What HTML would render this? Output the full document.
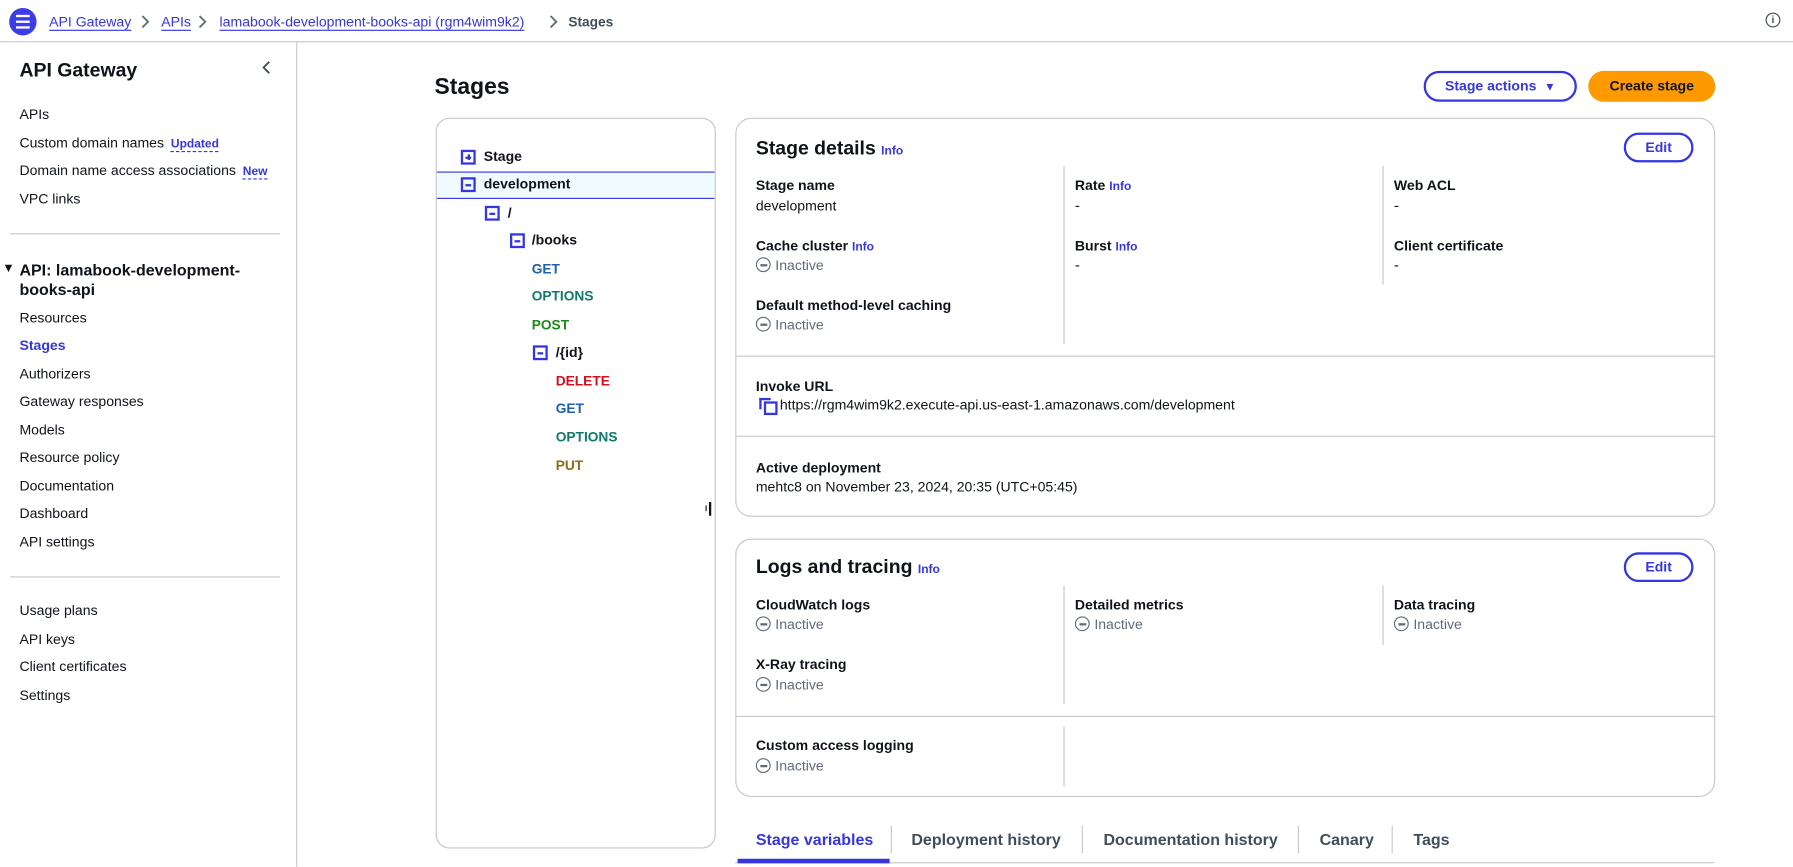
<!DOCTYPE html>
<html><head><meta charset="utf-8">
<style>
html,body{margin:0;padding:0;background:#fff;overflow:hidden;width:1793px;height:867px}
#w{position:absolute;left:0;top:0;width:1568px;height:758px;transform:scale(1.14349);transform-origin:0 0;font-family:"Liberation Sans",sans-serif;color:#0f141a;font-size:13px}
.a{position:absolute;white-space:nowrap;line-height:16px}
.b{font-weight:bold}
.bl{color:#3636e0}
.lk{color:#3636e0;text-decoration:underline;text-underline-offset:3px}
.g{color:#5f6b7a}
.n{font-size:12.3px}
.hl{position:absolute;background:#c6c6cd;height:1px}
.vl{position:absolute;background:#c6c6cd;width:1px}
.card{position:absolute;border:1px solid #c6c6cd;border-radius:14px;background:#fff}
.box{position:absolute;width:9px;height:9px;border:2px solid #3636e0}
.box:after{content:"";position:absolute;left:2px;top:3.5px;width:5px;height:2px;background:#3636e0}
.plus:before{content:"";position:absolute;left:3.5px;top:2px;width:2px;height:5px;background:#3636e0}
.btn{position:absolute;border:2px solid #3636e0;border-radius:20px;color:#3636e0;font-weight:bold;text-align:center;box-sizing:border-box}
.ic{display:inline-block;width:11px;height:11px;border:1.5px solid #5f6b7a;border-radius:50%;position:relative;vertical-align:-2px;margin-right:4px}
.ic:after{content:"";position:absolute;left:2.5px;top:4.5px;width:6px;height:2px;background:#5f6b7a}
.inf{font-size:10.5px;color:#3636e0;font-weight:bold}
.h{font-size:12.3px;font-weight:bold}
.badge{font-size:10.5px;color:#3636e0;font-weight:bold;border-bottom:1px dashed #3636e0;margin-left:6px}
.chev{position:absolute;top:13px}
</style></head><body><div id="w">
<!-- top bar -->
<div style="position:absolute;left:8px;top:7px;width:24px;height:24px;border-radius:50%;background:#3d3de8"></div>
<div style="position:absolute;left:14px;top:13px;width:12px;height:2px;background:#fff;box-shadow:0 5px 0 #fff,0 10px 0 #fff"></div>
<div class="a lk n" style="left:43px;top:11px">API Gateway</div>
<svg class="chev" style="left:123px" width="8" height="12"><polyline points="1.5,1 6.5,6 1.5,11" fill="none" stroke="#5f6b7a" stroke-width="1.6"/></svg>
<div class="a lk n" style="left:141px;top:11px">APIs</div>
<svg class="chev" style="left:173px" width="8" height="12"><polyline points="1.5,1 6.5,6 1.5,11" fill="none" stroke="#5f6b7a" stroke-width="1.6"/></svg>
<div class="a lk n" style="left:192px;top:11px">lamabook-development-books-api (rgm4wim9k2)</div>
<svg class="chev" style="left:480px" width="8" height="12"><polyline points="1.5,1 6.5,6 1.5,11" fill="none" stroke="#5f6b7a" stroke-width="1.6"/></svg>
<div class="a" style="left:497px;top:11px;color:#414d5c;font-weight:bold;font-size:12px">Stages</div>
<div style="position:absolute;left:1544px;top:11px;width:11px;height:11px;border:1.7px solid #414d5c;border-radius:50%;font:bold 9px 'Liberation Sans';text-align:center;line-height:11px;color:#414d5c">i</div>
<div class="hl" style="left:0;top:36px;width:1568px"></div>
<!-- sidebar -->
<div class="vl" style="left:259px;top:37px;height:721px"></div>
<div class="a b" style="left:17px;top:52px;font-size:17px;line-height:20px">API Gateway</div>
<svg style="position:absolute;left:229px;top:53px" width="8" height="12"><polyline points="6.5,1 1.5,6 6.5,11" fill="none" stroke="#414d5c" stroke-width="1.6"/></svg>
<div class="a n" style="left:17px;top:92px">APIs</div>
<div class="a n" style="left:17px;top:117px">Custom domain names<span class="badge">Updated</span></div>
<div class="a n" style="left:17px;top:141px">Domain name access associations<span class="badge">New</span></div>
<div class="a n" style="left:17px;top:166px">VPC links</div>
<div class="hl" style="left:9px;top:204px;width:236px"></div>
<div class="a" style="left:2px;top:227px;font-size:11px">▼</div>
<div class="a b" style="left:17px;top:228px;font-size:14px;line-height:17px">API: lamabook-development-<br>books-api</div>
<div class="a n" style="left:17px;top:270px">Resources</div>
<div class="a b bl n" style="left:17px;top:294px">Stages</div>
<div class="a n" style="left:17px;top:319px">Authorizers</div>
<div class="a n" style="left:17px;top:343px">Gateway responses</div>
<div class="a n" style="left:17px;top:368px">Models</div>
<div class="a n" style="left:17px;top:392px">Resource policy</div>
<div class="a n" style="left:17px;top:417px">Documentation</div>
<div class="a n" style="left:17px;top:441px">Dashboard</div>
<div class="a n" style="left:17px;top:466px">API settings</div>
<div class="hl" style="left:9px;top:504px;width:236px"></div>
<div class="a n" style="left:17px;top:526px">Usage plans</div>
<div class="a n" style="left:17px;top:551px">API keys</div>
<div class="a n" style="left:17px;top:575px">Client certificates</div>
<div class="a n" style="left:17px;top:600px">Settings</div>
<!-- header -->
<div class="a b" style="left:380px;top:64px;font-size:20px;line-height:24px">Stages</div>
<div class="btn" style="left:1245px;top:62px;width:134px;height:27px;line-height:23px;font-size:12.3px">Stage actions &nbsp;<span style="font-size:10px">▼</span></div>
<div style="position:absolute;left:1389px;top:62px;width:111px;height:27px;border-radius:14px;background:#ff9900;text-align:center;line-height:27px;font-weight:bold;font-size:12.3px">Create stage</div>
<!-- tree -->
<div class="card" style="left:381px;top:103px;width:243px;height:637px;border-radius:12px;overflow:hidden">
<div style="position:absolute;left:0;top:46px;width:243px;height:22px;background:#f0fbff;border-top:1px solid #3636e0;border-bottom:1px solid #3636e0"></div>
</div>
<div class="box plus" style="left:403px;top:131px"></div><div class="a b n" style="left:423px;top:129px">Stage</div>
<div class="box" style="left:403px;top:155px"></div><div class="a b n" style="left:423px;top:153px">development</div>
<div class="box" style="left:424px;top:180px"></div><div class="a b n" style="left:444px;top:178px">/</div>
<div class="box" style="left:446px;top:204px"></div><div class="a b n" style="left:465px;top:202px">/books</div>
<div class="a b" style="left:465px;top:227px;color:#1f5fad;font-size:12px">GET</div>
<div class="a b" style="left:465px;top:251px;color:#0f7a6a;font-size:12px">OPTIONS</div>
<div class="a b" style="left:465px;top:276px;color:#1b8a1b;font-size:12px">POST</div>
<div class="box" style="left:466px;top:302px"></div><div class="a b n" style="left:486px;top:300px">/{id}</div>
<div class="a b" style="left:486px;top:325px;color:#d0101e;font-size:12px">DELETE</div>
<div class="a b" style="left:486px;top:349px;color:#1f5fad;font-size:12px">GET</div>
<div class="a b" style="left:486px;top:374px;color:#0f7a6a;font-size:12px">OPTIONS</div>
<div class="a b" style="left:486px;top:399px;color:#8a6d12;font-size:12px">PUT</div>
<div style="position:absolute;left:620px;top:439px;width:2px;height:12px;background:#0f141a"></div>
<div style="position:absolute;left:617px;top:442px;width:1px;height:5px;background:#0f141a"></div>
<!-- Stage details -->
<div class="card" style="left:643px;top:103px;width:855px;height:347px"></div>
<div class="a b" style="left:661px;top:120px;font-size:17px;line-height:20px">Stage details <span class="inf">Info</span></div>
<div class="btn" style="left:1420px;top:116px;width:61px;height:26px;line-height:22px;font-size:12.3px">Edit</div>
<div class="a h" style="left:661px;top:154px">Stage name</div><div class="a n" style="left:661px;top:172px">development</div>
<div class="a h" style="left:661px;top:207px">Cache cluster <span class="inf">Info</span></div><div class="a g n" style="left:661px;top:224px"><span class="ic"></span>Inactive</div>
<div class="a h" style="left:661px;top:259px">Default method-level caching</div><div class="a g n" style="left:661px;top:276px"><span class="ic"></span>Inactive</div>
<div class="vl" style="left:930px;top:145px;height:156px"></div>
<div class="a h" style="left:940px;top:154px">Rate <span class="inf">Info</span></div><div class="a" style="left:940px;top:172px">-</div>
<div class="a h" style="left:940px;top:207px">Burst <span class="inf">Info</span></div><div class="a" style="left:940px;top:224px">-</div>
<div class="vl" style="left:1209px;top:145px;height:104px"></div>
<div class="a h" style="left:1219px;top:154px">Web ACL</div><div class="a" style="left:1219px;top:172px">-</div>
<div class="a h" style="left:1219px;top:207px">Client certificate</div><div class="a" style="left:1219px;top:224px">-</div>
<div class="hl" style="left:644px;top:311px;width:855px"></div>
<div class="a h" style="left:661px;top:330px">Invoke URL</div>
<div style="position:absolute;left:664px;top:348px;width:8px;height:8px;border-top:2px solid #3636e0;border-left:2px solid #3636e0"></div>
<div style="position:absolute;left:668px;top:351px;width:8px;height:8px;border:2px solid #3636e0"></div>
<div class="a n" style="left:682px;top:346px">https://rgm4wim9k2.execute-api.us-east-1.amazonaws.com/development</div>
<div class="hl" style="left:644px;top:381px;width:855px"></div>
<div class="a h" style="left:661px;top:401px">Active deployment</div>
<div class="a n" style="left:661px;top:418px">mehtc8 on November 23, 2024, 20:35 (UTC+05:45)</div>
<!-- Logs -->
<div class="card" style="left:643px;top:471px;width:855px;height:224px"></div>
<div class="a b" style="left:661px;top:486px;font-size:17px;line-height:20px">Logs and tracing <span class="inf">Info</span></div>
<div class="btn" style="left:1420px;top:483px;width:61px;height:26px;line-height:22px;font-size:12.3px">Edit</div>
<div class="a h" style="left:661px;top:521px">CloudWatch logs</div><div class="a g n" style="left:661px;top:538px"><span class="ic"></span>Inactive</div>
<div class="a h" style="left:661px;top:573px">X-Ray tracing</div><div class="a g n" style="left:661px;top:591px"><span class="ic"></span>Inactive</div>
<div class="vl" style="left:930px;top:512px;height:104px"></div>
<div class="a h" style="left:940px;top:521px">Detailed metrics</div><div class="a g n" style="left:940px;top:538px"><span class="ic"></span>Inactive</div>
<div class="vl" style="left:1209px;top:512px;height:52px"></div>
<div class="a h" style="left:1219px;top:521px">Data tracing</div><div class="a g n" style="left:1219px;top:538px"><span class="ic"></span>Inactive</div>
<div class="hl" style="left:644px;top:626px;width:855px"></div>
<div class="vl" style="left:930px;top:635px;height:53px"></div>
<div class="a h" style="left:661px;top:644px">Custom access logging</div><div class="a g n" style="left:661px;top:662px"><span class="ic"></span>Inactive</div>
<!-- tabs -->
<div class="hl" style="left:643px;top:754px;width:856px"></div>
<div style="position:absolute;left:645px;top:751px;width:133px;height:4px;background:#3636e0"></div>
<div class="a b bl" style="left:661px;top:726px;font-size:14px">Stage variables</div>
<div class="vl" style="left:779px;top:722px;height:24px"></div>
<div class="a b" style="left:797px;top:726px;font-size:14px;color:#414d5c">Deployment history</div>
<div class="vl" style="left:946px;top:722px;height:24px"></div>
<div class="a b" style="left:965px;top:726px;font-size:14px;color:#414d5c">Documentation history</div>
<div class="vl" style="left:1135px;top:722px;height:24px"></div>
<div class="a b" style="left:1154px;top:726px;font-size:14px;color:#414d5c">Canary</div>
<div class="vl" style="left:1217px;top:722px;height:24px"></div>
<div class="a b" style="left:1236px;top:726px;font-size:14px;color:#414d5c">Tags</div>
</div></body></html>
